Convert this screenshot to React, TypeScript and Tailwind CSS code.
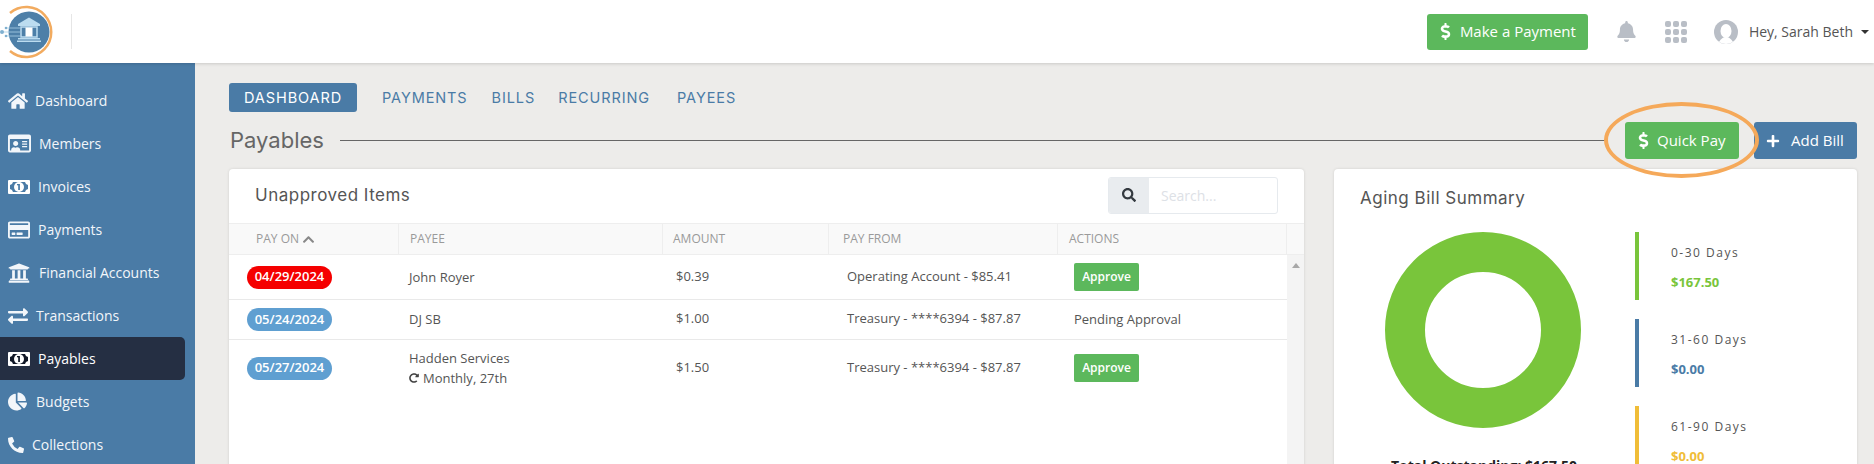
import {
  FaHome, FaRegIdCard, FaRegCreditCard, FaUniversity, FaExchangeAlt,
  FaChartPie, FaPhoneAlt, FaDollarSign, FaBell, FaPlus, FaSearch, FaChevronUp, FaRedoAlt,
} from "react-icons/fa";

// solid "fa-money" bill, the centre takes the colour of the row behind it
function MoneyIcon({ inner }: { inner: string }) {
  return (
    <svg width="22" height="14" viewBox="0 0 22 14">
      <rect width="22" height="14" rx="1" fill="#ffffff" />
      <path d="M5 2 H17 Q17.5 4.5 20 5 V9 Q17.5 9.5 17 12 H5 Q4.5 9.5 2 9 V5 Q4.5 4.5 5 2 Z" fill={inner} />
      <circle cx="11" cy="7" r="5" fill="#ffffff" />
      <rect x="10.2" y="4" width="1.7" height="6" fill={inner} />
      <rect x="9" y="4" width="2" height="1.3" fill={inner} />
    </svg>
  );
}

const nav = [
  { label: "Dashboard", icon: <FaHome />, size: "text-[20px]", gap: "w-[27px]" },
  { label: "Members", icon: <FaRegIdCard />, size: "text-[23px]", gap: "w-[31px]" },
  { label: "Invoices", icon: <MoneyIcon inner="#4a7ba6" />, size: "text-[22px]", gap: "w-[30px]" },
  { label: "Payments", icon: <FaRegCreditCard />, size: "text-[22px]", gap: "w-[30px]" },
  { label: "Financial Accounts", icon: <FaUniversity />, size: "text-[22px]", gap: "w-[31px]" },
  { label: "Transactions", icon: <FaExchangeAlt />, size: "text-[20px]", gap: "w-[28px]" },
  { label: "Payables", icon: <MoneyIcon inner="#111827" />, size: "text-[22px]", gap: "w-[30px]", active: true },
  { label: "Budgets", icon: <FaChartPie />, size: "text-[19px]", gap: "w-[28px]" },
  { label: "Collections", icon: <FaPhoneAlt />, size: "text-[16px]", gap: "w-[24px]" },
];

const rows = [
  { date: "04/29/2024", late: true, payee: "John Royer", amount: "$0.39", from: "Operating Account - $85.41", approve: true, h: "h-[45px]" },
  { date: "05/24/2024", payee: "DJ SB", amount: "$1.00", from: "Treasury - ****6394 - $87.87", approve: false, h: "h-[40px]" },
  { date: "05/27/2024", payee: "Hadden Services", repeat: "Monthly, 27th", amount: "$1.50", from: "Treasury - ****6394 - $87.87", approve: true, h: "h-[56px]" },
];

const aging = [
  { label: "0-30 Days", value: "$167.50", bar: "bg-[#79c53b]", text: "text-[#79c53b]" },
  { label: "31-60 Days", value: "$0.00", bar: "bg-[#4a7ba6]", text: "text-[#4a7ba6]" },
  { label: "61-90 Days", value: "$0.00", bar: "bg-[#f0bd38]", text: "text-[#f0bd38]" },
];

const cols = "grid grid-cols-[170px_264px_166px_229px_229px]";
const headingFont = "font-['Inter',sans-serif]";

function Logo() {
  return (
    <svg width="56" height="58" viewBox="0 0 56 58" className="shrink-0">
      <path d="M10 10 A25 25 0 1 1 10 48" fill="none" stroke="#f2ab5f" strokeWidth="2.5" />
      <circle cx="29" cy="29" r="20.5" fill="#4d7fa8" />
      <path d="M29 14.5 L40 21 V23 H18 V21 Z" fill="#bcdcf0" />
      <rect x="21" y="24" width="16" height="10" fill="none" stroke="#bcdcf0" strokeWidth="1.5" />
      <rect x="25.5" y="24.5" width="7" height="9" fill="#ffffff" />
      <rect x="18" y="35" width="22" height="1.5" fill="#bcdcf0" />
      <rect x="17" y="37.5" width="24" height="1.5" fill="#bcdcf0" />
      <path d="M2 29 H20 M6 25 H20 M6 33 H20" stroke="#a9cfe6" strokeWidth="0.8" />
      <circle cx="2" cy="29" r="2" fill="#7fb0d0" />
      <circle cx="6" cy="25" r="1.3" fill="#7fb0d0" />
      <circle cx="6" cy="33" r="1.3" fill="#7fb0d0" />
    </svg>
  );
}

function GridIcon() {
  return (
    <svg width="22" height="22" viewBox="0 0 22 22" className="text-[#b9bec6]" fill="currentColor">
      {[0, 8, 16].map((y) =>
        [0, 8, 16].map((x) => <rect key={`${x}-${y}`} x={x} y={y} width="6" height="6" rx="2" />)
      )}
    </svg>
  );
}

function Avatar() {
  return (
    <svg width="24" height="24" viewBox="0 0 24 24">
      <circle cx="12" cy="12" r="12" fill="#b9bec6" />
      <ellipse cx="12" cy="11" rx="5.5" ry="7" fill="#ffffff" />
      <path d="M5 22 Q8 17 12 17 Q16 17 19 22 Q12 26 5 22 Z" fill="#ffffff" />
    </svg>
  );
}

function Header() {
  return (
    <header className="relative z-10 flex h-[63px] shrink-0 items-center bg-white pr-[5px] shadow-[0_1px_3px_rgba(0,0,0,0.15)]">
      <Logo />
      <div className="ml-[15px] h-[35px] w-px bg-[#e6e6e6]" />
      <button className="ml-auto flex h-[36px] w-[161px] items-center rounded-[3px] bg-[#5cb85c] pl-[10px] text-[15px] text-white">
        <FaDollarSign className="text-[17px]" />
        <span className="ml-[6px]">Make a Payment</span>
      </button>
      <FaBell className="ml-[28px] text-[21px] text-[#b9bec6]" />
      <div className="ml-[28px]"><GridIcon /></div>
      <div className="ml-[27px]"><Avatar /></div>
      <span className="ml-[11px] text-[14px] text-[#555]">Hey, Sarah Beth</span>
      <span className="ml-[8px] h-0 w-0 border-x-[4px] border-t-[4px] border-x-transparent border-t-[#333]" />
    </header>
  );
}

function Sidebar() {
  return (
    <aside className="flex w-[195px] shrink-0 flex-col bg-[#4a7ba6] pt-[16px] pr-[10px]">
      {nav.map((item) => (
        <div
          key={item.label}
          className={`flex h-[43px] shrink-0 items-center rounded-r-[5px] pl-[8px] text-[14px] ${item.active ? "bg-[#252f43] text-white" : "text-[#f2f6fa]"}`}
        >
          <span className={`flex items-center ${item.gap} ${item.size}`}>{item.icon}</span>
          <span>{item.label}</span>
        </div>
      ))}
    </aside>
  );
}

function Tabs() {
  return (
    <div className={`flex h-[29px] items-center text-[14.5px] tracking-[0.9px] text-[#4a7ba6] ${headingFont}`}>
      <span className="flex h-[29px] w-[128px] items-center justify-center rounded-[3px] bg-[#4a7ba6] text-white">DASHBOARD</span>
      <span className="ml-[25px]">PAYMENTS</span>
      <span className="ml-[24px]">BILLS</span>
      <span className="ml-[23px]">RECURRING</span>
      <span className="ml-[27px]">PAYEES</span>
    </div>
  );
}

function TitleRow() {
  return (
    <div className="mt-[10px] flex h-[37px] items-center">
      <h1 className={`ml-px text-[22px] text-[#666] ${headingFont}`}>Payables</h1>
      <div className="ml-[16px] mr-[12px] h-px flex-1 bg-[#666]" />
      <div className="relative ml-[7px]">
        <button className="flex h-[37px] w-[114px] items-center rounded-[3px] bg-[#5cb85c] pl-[10px] text-[15px] text-white">
          <FaDollarSign className="text-[17px]" />
          <span className="ml-[5px]">Quick Pay</span>
        </button>
        <div className="absolute -left-[21px] -top-[20px] h-[76px] w-[155px] rounded-[50%] border-[4px] border-[#f5a95a]" />
      </div>
      <button className="ml-[15px] flex h-[37px] w-[103px] items-center rounded-[3px] bg-[#4a7ba6] pl-[12px] text-[15px] text-white">
        <FaPlus className="text-[14px]" />
        <span className="ml-[11px]">Add Bill</span>
      </button>
    </div>
  );
}

function DateBadge({ date, late }: { date: string; late?: boolean }) {
  return (
    <span className={`ml-[18px] flex h-[23px] w-[85px] items-center justify-center rounded-full text-[13px] font-semibold text-white ${late ? "bg-[#f50000]" : "bg-[#5f9fd1]"}`}>
      {date}
    </span>
  );
}

function UnapprovedCard() {
  return (
    <section className="w-[1075px] shrink-0 rounded-t-[4px] bg-white shadow-[0_0_3px_rgba(0,0,0,0.12)]">
      <div className="flex h-[54px] items-center justify-between pl-[26px] pr-[26px]">
        <h2 className={`text-[17px] tracking-[0.5px] text-[#555] ${headingFont}`}>Unapproved Items</h2>
        <div className="-mt-[2px] flex h-[37px] w-[170px] overflow-hidden rounded-[3px] border border-[#e6eaee]">
          <span className="flex w-[40px] items-center justify-center bg-[#e9ecef] text-[14px] text-[#343a40]"><FaSearch /></span>
          <span className="flex items-center pl-[12px] text-[14px] text-[#dde1e6]">Search...</span>
        </div>
      </div>
      <div className="flex h-[32px] border-y border-[#eeeeee] bg-[#f9f9f9] text-[12px] text-[#9a9a9a]">
        <div className={`${cols} w-[1058px]`}>
          <div className="flex items-center gap-[3px] border-r border-[#eeeeee] pl-[27px]">PAY ON <FaChevronUp className="text-[13px] text-[#888]" /></div>
          <div className="flex items-center border-r border-[#eeeeee] pl-[11px]">PAYEE</div>
          <div className="flex items-center border-r border-[#eeeeee] pl-[10px]">AMOUNT</div>
          <div className="flex items-center border-r border-[#eeeeee] pl-[14px]">PAY FROM</div>
          <div className="flex items-center border-r border-[#eeeeee] pl-[11px]">ACTIONS</div>
        </div>
      </div>
      <div className="flex h-[209px]">
        <div className="w-[1058px]">
          {rows.map((r) => (
            <div key={r.date} className={`${cols} ${r.h} items-center border-b border-[#e9e9e9] text-[13px] text-[#555] last:border-b-0`}>
              <DateBadge date={r.date} late={r.late} />
              <div className="-mt-px pl-[10px] leading-[20px]">
                <div>{r.payee}</div>
                {r.repeat && (
                  <div className="flex items-center gap-[4px]"><FaRedoAlt className="text-[10px] text-[#444]" />{r.repeat}</div>
                )}
              </div>
              <div className="-mt-px pl-[13px]">{r.amount}</div>
              <div className="-mt-px pl-[18px]">{r.from}</div>
              <div className="pl-[16px]">
                {r.approve ? (
                  <button className="h-[28px] w-[65px] rounded-[2px] bg-[#5cb85c] text-[12px] font-semibold text-white">Approve</button>
                ) : (
                  "Pending Approval"
                )}
              </div>
            </div>
          ))}
        </div>
        <div className="flex w-[17px] justify-center bg-[#f4f4f4] pt-[8px]">
          <span className="h-0 w-0 border-x-[4px] border-b-[5px] border-x-transparent border-b-[#a8a8a8]" />
        </div>
      </div>
    </section>
  );
}

function AgingCard() {
  return (
    <section className="ml-[30px] flex-1 rounded-t-[4px] bg-white pl-[26px] shadow-[0_0_3px_rgba(0,0,0,0.12)]">
      <h2 className={`pt-[19px] text-[17px] leading-[20px] tracking-[0.5px] text-[#555] ${headingFont}`}>Aging Bill Summary</h2>
      <div className="mt-[24px] flex">
        <div className="w-[275px] shrink-0">
          <svg width="196" height="196" viewBox="0 0 196 196" className="ml-[25px]">
            <circle cx="98" cy="98" r="78" fill="none" stroke="#79c53b" strokeWidth="40" />
          </svg>
          <p className="ml-[-27px] mt-[27px] text-center text-[14px] font-bold text-[#222]">Total Outstanding: $167.50</p>
        </div>
        <div className="flex flex-col gap-[19px]">
          {aging.map((a) => (
            <div key={a.label} className="flex h-[68px]">
              <div className={`w-[4px] ${a.bar}`} />
              <div className="ml-[32px] pt-[13px]">
                <div className="text-[12px] leading-[16px] tracking-[1.5px] text-[#555]">{a.label}</div>
                <div className={`mt-[13px] text-[13px] font-bold leading-[16px] ${a.text}`}>{a.value}</div>
              </div>
            </div>
          ))}
        </div>
      </div>
    </section>
  );
}

export default function App() {
  return (
    <div className="flex h-[464px] w-[1874px] flex-col overflow-hidden bg-[#edecea] font-['Open_Sans',sans-serif]">
      <Header />
      <div className="flex min-h-0 flex-1">
        <Sidebar />
        <main className="min-w-0 flex-1 pl-[34px] pr-[17px] pt-[20px]">
          <Tabs />
          <TitleRow />
          <div className="mt-[10px] flex">
            <UnapprovedCard />
            <AgingCard />
          </div>
        </main>
      </div>
    </div>
  );
}
